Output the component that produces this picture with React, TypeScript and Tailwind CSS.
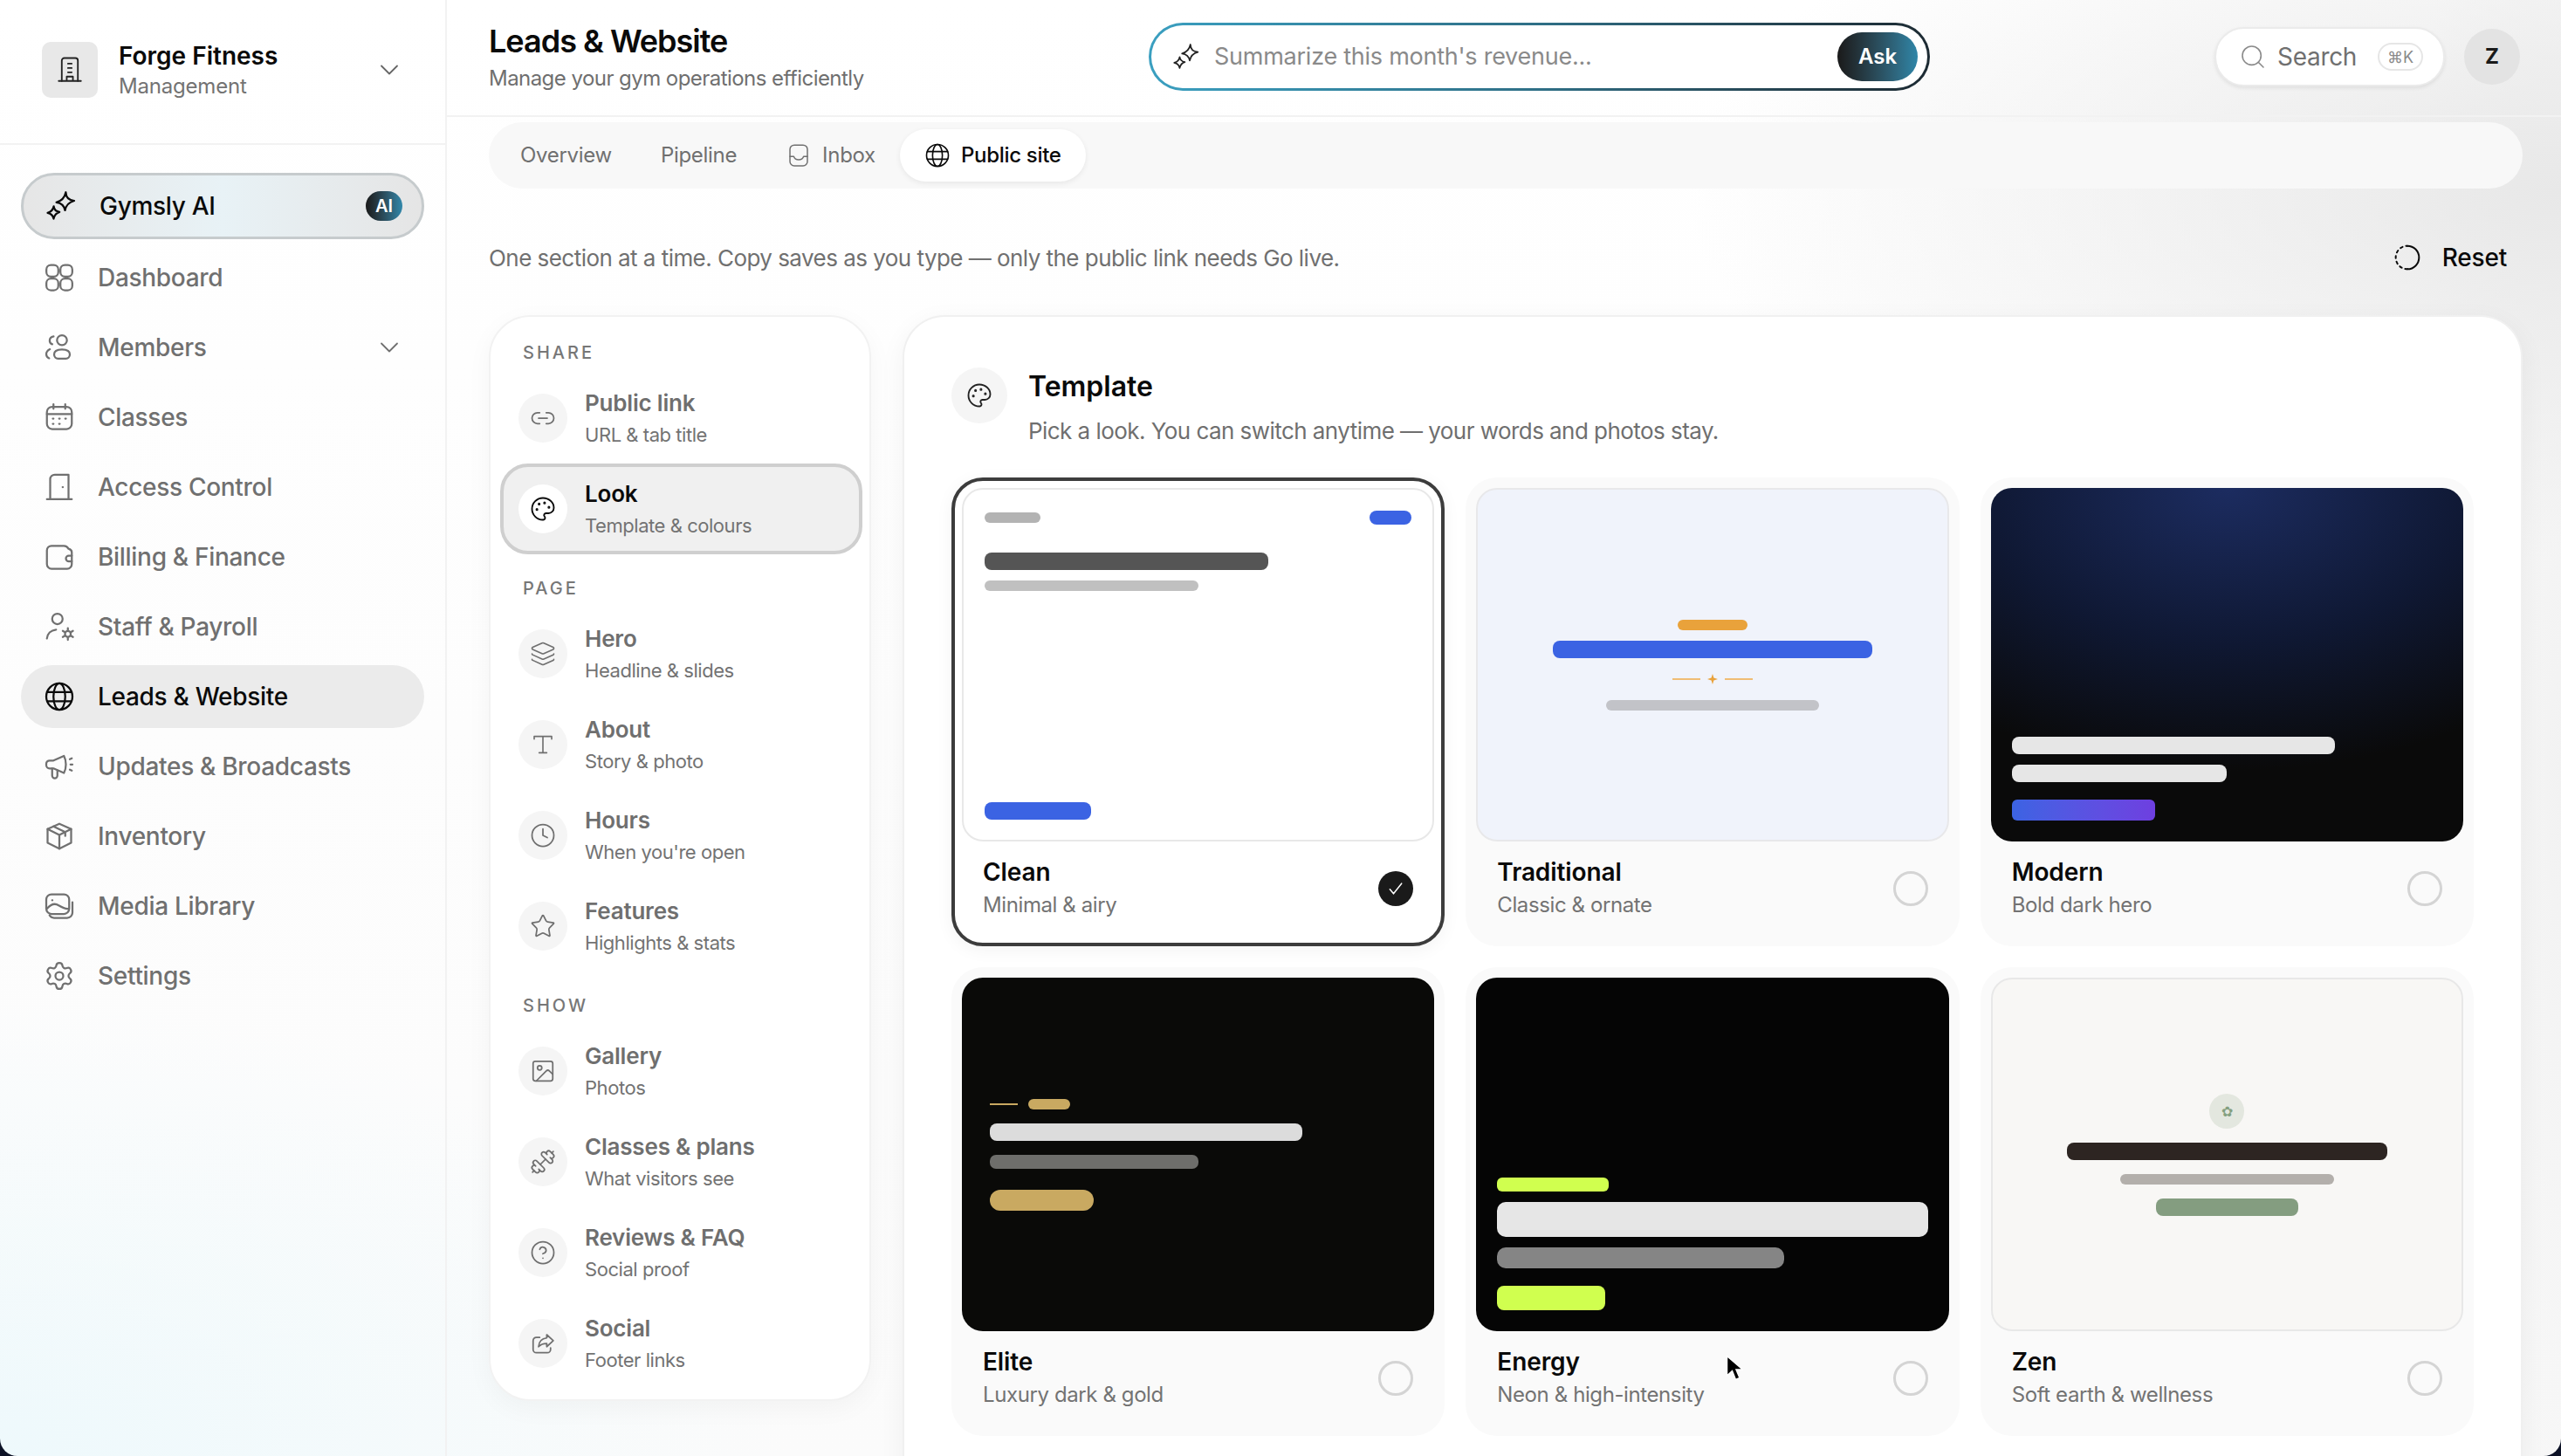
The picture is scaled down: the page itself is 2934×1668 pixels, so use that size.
import type { ReactNode } from 'react';
import {
  ChevronDown,
  CircleHelp,
  Clock,
  Dumbbell,
  Image,
  Layers,
  Link2,
  Palette,
  Search,
  Settings,
  Star,
} from 'lucide-react';

// ==============================
// 1. ICONS
// ==============================

function Ico({ size = 36, sw = 1.5, children }: { size?: number; sw?: number; children: ReactNode }) {
  return (
    <svg width={size} height={size} viewBox="0 0 24 24" fill="none" stroke="currentColor" strokeWidth={sw} strokeLinecap="round" strokeLinejoin="round" className="shrink-0">
      {children}
    </svg>
  );
}

const BuildingIcon = () => (
  <Ico size={34} sw={1.3}>
    <path d="M5.5 21V4.5a2 2 0 0 1 2-2h9a2 2 0 0 1 2 2V21" />
    <path d="M3 21h18M10.5 7h3M10.5 10.5h3M10.5 14h3M9.5 21v-3.5h5V21" />
  </Ico>
);
const SparkleIcon = ({ size = 36, sw = 1.5 }: { size?: number; sw?: number }) => (
  <Ico size={size} sw={sw}>
    <path d="M15.6 1.500 C15.700 5.400 17.500 7.600 22 8 C18 9.100 15.800 11.100 15 15.300 C14.300 11.400 12.500 9.700 8.400 9.200 C12.600 8.100 14.700 5.700 15.600 1.500Z" />
    <path d="M6.400 12.200 C6.600 14.600 7.800 16 10.800 16.600 C8.300 17.300 7 18.700 6.300 21.700 C5.800 19.100 4.600 17.800 1.700 17.200 C4.500 16.500 5.900 14.900 6.400 12.200Z" />
  </Ico>
);
const DashIcon = () => (
  <Ico>
    <rect x="2.100" y="2.400" width="9.100" height="8.900" rx="3.400" />
    <rect x="12.800" y="2.400" width="9.100" height="8.900" rx="3.400" />
    <rect x="2.100" y="12.800" width="9.100" height="8.900" rx="3.400" />
    <rect x="12.800" y="12.800" width="9.100" height="8.900" rx="3.400" />
  </Ico>
);
const MembersIcon = () => (
  <Ico>
    <circle cx="14" cy="6.500" r="3.800" />
    <path d="M14 13.500c-4 0-6 1.600-6 3.800 0 1.800 1.400 3.200 3 3.200h6c1.600 0 3-1.400 3-3.200 0-2.200-2-3.800-6-3.800z" />
    <path d="M7.600 3.600C5.600 4 4.600 5.200 4.600 6.800c0 1.300.7 2.300 2 2.800M4.800 13.400C3 14.300 2 15.600 2 17.200c0 1.400.8 2.500 2.200 3.100" />
  </Ico>
);
const CalendarIcon = () => (
  <Ico>
    <rect x="2.500" y="4" width="19" height="17" rx="4" />
    <path d="M7.500 2v3.500M16.500 2v3.500M2.500 9.500h19" />
    <path d="M7 13h.5M11.800 13h.5M16.500 13h.5M7 17h.5M11.800 17h.5" />
  </Ico>
);
const DoorIcon = () => (
  <Ico>
    <path d="M5 21V6a3.500 3.500 0 0 1 3.500-3.500H19V21" />
    <path d="M2.500 21.300h19M14.500 12h.2" />
  </Ico>
);
const WalletIcon = () => (
  <Ico>
    <path d="M19 5.800 C18.300 4.400 17.400 3.500 15.500 3.500 H6a3.500 3.500 0 0 0-3.500 3.500v10.500a3.500 3.500 0 0 0 3.500 3.500h12a3.500 3.500 0 0 0 3.500-3.500V8.500 C21.500 7 20.500 6.200 19 5.800z" />
    <path d="M21.500 11h-2.300a2.200 2.200 0 0 0 0 4.400h2.300" />
  </Ico>
);
const StaffIcon = () => (
  <Ico>
    <circle cx="10.500" cy="6" r="4" />
    <path d="M2.500 21c.3-3.600 3-6.300 7-6.800" />
    <circle cx="18.500" cy="17.500" r="2.200" />
    <path d="M18.500 13v2M18.500 20v2M14.600 15.200l1.700 1M20.700 18.800l1.700 1M14.600 19.800l1.700-1M20.700 16.200l1.700-1" />
  </Ico>
);
const GlobeIcon = ({ size = 36, sw = 1.5 }: { size?: number; sw?: number }) => (
  <Ico size={size} sw={sw}>
    <circle cx="12" cy="12" r="10" />
    <ellipse cx="12" cy="12" rx="4.500" ry="10" />
    <path d="M2.800 8.500h18.400M2.800 15.500h18.400" />
  </Ico>
);
const MegaphoneIcon = () => (
  <Ico>
    <path d="M15.500 4 7.500 7.500H4.500a2.500 2.500 0 0 0-2.500 2.500v1a2.500 2.500 0 0 0 2.500 2.500h3l8 3.500c.8-1.500 1.500-3.500 1.500-6.500s-.7-5-1.500-6.500z" />
    <path d="M6.500 13.500v5.500a2 2 0 0 0 4 0v-4" />
    <path d="M20 6.500l1.500-.7M20.500 10.500h1.500M20 14.500l1.500.7" />
  </Ico>
);
const PackageIcon = () => (
  <Ico>
    <path d="M12 2.500 3 6.500v10.500l9 4.500 9-4.500V6.500z" />
    <path d="M3 6.500l9 4.500 9-4.500M12 11v10.500M7.500 4.500l9 4.300v3" />
  </Ico>
);
const MediaIcon = () => (
  <Ico>
    <rect x="2" y="3" width="17.500" height="15" rx="4" />
    <path d="M22 9v8a4 4 0 0 1-4 4H8a4 4 0 0 1-3.500-2" />
    <path d="M6.500 7.500h.2M2.500 14c3-3.500 6-4.500 9-2.500 3 1.800 5 3 7.500 2.500" />
  </Ico>
);
const InboxIcon = () => (
  <Ico size={30} sw={1.2}>
    <rect x="4" y="2.500" width="16" height="19" rx="4" />
    <path d="M4 13h3.500c.6 1.800 2.200 3 4.500 3s3.900-1.200 4.500-3H20" />
  </Ico>
);
const SerifT = () => (
  <Ico size={30} sw={1.3}>
    <path d="M4 7V4.500h16V7M12 4.500v15M8.500 19.500h7" />
  </Ico>
);
const ShareBoxIcon = () => (
  <Ico size={30} sw={1.4}>
    <path d="M9 6.500H6a3 3 0 0 0-3 3v8a3 3 0 0 0 3 3h10a3 3 0 0 0 3-3v-1.500" />
    <path d="M15.500 4l6 5.500-6 5.500v-3c-3.500 0-5.500.8-7.500 3 .3-4.500 3-7.500 7.500-8z" />
  </Ico>
);
const ResetIcon = () => (
  <svg width="32" height="32" viewBox="0 0 24 24" fill="none" stroke="currentColor" strokeWidth="1.500" strokeLinecap="round" className="shrink-0">
    <path d="M12 2a10 10 0 0 1 0 20" />
    <path d="M12 22A10 10 0 0 1 12 2" strokeDasharray="2 3" />
  </svg>
);

// ==============================
// 2. DATA
// ==============================

const navItems = [
  { label: 'Dashboard', icon: <DashIcon /> },
  { label: 'Members', icon: <MembersIcon />, chevron: true },
  { label: 'Classes', icon: <CalendarIcon /> },
  { label: 'Access Control', icon: <DoorIcon /> },
  { label: 'Billing & Finance', icon: <WalletIcon /> },
  { label: 'Staff & Payroll', icon: <StaffIcon /> },
  { label: 'Leads & Website', icon: <GlobeIcon />, active: true },
  { label: 'Updates & Broadcasts', icon: <MegaphoneIcon /> },
  { label: 'Inventory', icon: <PackageIcon /> },
  { label: 'Media Library', icon: <MediaIcon /> },
  { label: 'Settings', icon: <Settings size={36} strokeWidth={1.5} /> },
];

const sections = [
  {
    title: 'SHARE',
    rows: [
      { name: 'Public link', sub: 'URL & tab title', icon: <Link2 size={30} strokeWidth={1.4} /> },
      { name: 'Look', sub: 'Template & colours', icon: <Palette size={30} strokeWidth={1.5} />, active: true },
    ],
  },
  {
    title: 'PAGE',
    rows: [
      { name: 'Hero', sub: 'Headline & slides', icon: <Layers size={30} strokeWidth={1.3} /> },
      { name: 'About', sub: 'Story & photo', icon: <SerifT /> },
      { name: 'Hours', sub: "When you're open", icon: <Clock size={30} strokeWidth={1.4} /> },
      { name: 'Features', sub: 'Highlights & stats', icon: <Star size={30} strokeWidth={1.4} /> },
    ],
  },
  {
    title: 'SHOW',
    rows: [
      { name: 'Gallery', sub: 'Photos', icon: <Image size={30} strokeWidth={1.4} /> },
      { name: 'Classes & plans', sub: 'What visitors see', icon: <Dumbbell size={30} strokeWidth={1.4} /> },
      { name: 'Reviews & FAQ', sub: 'Social proof', icon: <CircleHelp size={30} strokeWidth={1.4} /> },
      { name: 'Social', sub: 'Footer links', icon: <ShareBoxIcon /> },
    ],
  },
];

// ==============================
// 3. TEMPLATE PREVIEWS
// ==============================

const CleanPreview = () => (
  <div className="flex h-[405px] flex-col rounded-[24px] border-2 border-[#e8e8e8] bg-white pt-[24px] pr-[24px] pb-[23px] pl-[24px]">
    <div className="flex items-center justify-between">
      <div className="h-[12px] w-[64px] rounded-[6px] bg-[#b3b3b3]" />
      <div className="h-[16px] w-[48px] rounded-full bg-[#3b63e3]" />
    </div>
    <div className="mt-[32px] h-[20px] w-[325px] rounded-[8px] bg-[#555555]" />
    <div className="mt-[12px] h-[12px] w-[245px] rounded-[6px] bg-[#c0c0c0]" />
    <div className="mt-auto h-[20px] w-[122px] rounded-[8px] bg-[#3b63e3]" />
  </div>
);

const TraditionalPreview = () => (
  <div className="flex h-[405px] flex-col items-center justify-center rounded-[24px] border-2 border-[#e8e8ea] bg-[#f0f3fb]">
    <div className="h-[12px] w-[80px] rounded-[6px] bg-[#e9a23b]" />
    <div className="mt-[12px] h-[20px] w-[366px] rounded-[8px] bg-[#3b63e3]" />
    <div className="mt-[18px] flex h-[12px] items-center gap-[8px]">
      <div className="h-[2px] w-[32px] bg-[#f0bd74]" />
      <svg width="12" height="12" viewBox="0 0 12 12" className="text-[#e9a23b]">
        <path d="M6 0 7.400 4.600 12 6 7.400 7.400 6 12 4.600 7.400 0 6 4.600 4.600Z" fill="currentColor" />
      </svg>
      <div className="h-[2px] w-[32px] bg-[#f0bd74]" />
    </div>
    <div className="mt-[18px] h-[12px] w-[244px] rounded-[6px] bg-[#c2c3c8]" />
  </div>
);

const ModernPreview = () => (
  <div className="flex h-[405px] flex-col justify-end rounded-[24px] bg-[radial-gradient(ellipse_95%_80%_at_50%_0%,#1c2c60_0%,#0f1833_55%,#0a0a0a_100%)] p-[24px]">
    <div className="h-[20px] w-[370px] rounded-[8px] bg-[#e6e6e6]" />
    <div className="mt-[12px] h-[20px] w-[246px] rounded-[8px] bg-[#e6e6e6]" />
    <div className="mt-[20px] h-[24px] w-[164px] rounded-[6px] bg-gradient-to-r from-[#3b63e3] to-[#6e3fe0]" />
  </div>
);

const ElitePreview = () => (
  <div className="flex h-[405px] flex-col justify-center rounded-[24px] bg-[#0a0a08] pl-[32px]">
    <div className="flex items-center gap-[12px]">
      <div className="h-[2px] w-[32px] bg-[#c9a961]" />
      <div className="h-[12px] w-[48px] rounded-[6px] bg-[#c9a961]" />
    </div>
    <div className="mt-[16px] h-[20px] w-[358px] rounded-[8px] bg-[#dcdcdc]" />
    <div className="mt-[16px] h-[16px] w-[239px] rounded-[7px] bg-[#6e6e6b]" />
    <div className="mt-[24px] h-[24px] w-[119px] rounded-full bg-[#c9a961]" />
  </div>
);

const EnergyPreview = () => (
  <div className="flex h-[405px] flex-col justify-end rounded-[24px] bg-[#050505] px-[24px] pb-[24px]">
    <div className="h-[16px] w-[128px] rounded-[6px] bg-[#d0ff4f]" />
    <div className="mt-[12px] h-[40px] w-full rounded-[10px] bg-[#e6e6e6]" />
    <div className="mt-[12px] h-[24px] w-[329px] rounded-[10px] bg-[#858585]" />
    <div className="mt-[20px] h-[28px] w-[124px] rounded-[8px] bg-[#d0ff4f]" />
  </div>
);

const ZenPreview = () => (
  <div className="flex h-[405px] flex-col items-center justify-center rounded-[24px] border-2 border-[#e8e8e8] bg-[#f8f7f5]">
    <div className="flex h-[40px] w-[40px] items-center justify-center rounded-full bg-[#e3e7df] text-[16px] leading-none text-[#84a080]">✿</div>
    <div className="mt-[16px] h-[20px] w-[367px] rounded-[8px] bg-[#2d2522]" />
    <div className="mt-[16px] h-[12px] w-[245px] rounded-[6px] bg-[#b3afab]" />
    <div className="mt-[16px] h-[20px] w-[163px] rounded-[8px] bg-[#849d80]" />
  </div>
);

const templates = [
  { name: 'Clean', sub: 'Minimal & airy', preview: <CleanPreview />, selected: true },
  { name: 'Traditional', sub: 'Classic & ornate', preview: <TraditionalPreview /> },
  { name: 'Modern', sub: 'Bold dark hero', preview: <ModernPreview /> },
  { name: 'Elite', sub: 'Luxury dark & gold', preview: <ElitePreview /> },
  { name: 'Energy', sub: 'Neon & high-intensity', preview: <EnergyPreview /> },
  { name: 'Zen', sub: 'Soft earth & wellness', preview: <ZenPreview /> },
];

// ==============================
// 4. COMPONENT
// ==============================

function Sidebar() {
  return (
    <aside className="flex w-[512px] shrink-0 flex-col border-r-2 border-[#f2f2f2]">
      <div className="flex h-[166px] shrink-0 items-start border-b-2 border-[#f2f2f2] pt-[48px] pr-[46px] pl-[48px]">
        <div className="flex h-[64px] w-[64px] items-center justify-center rounded-[10px] bg-[#e8e8e8] text-[#222222]">
          <BuildingIcon />
        </div>
        <div className="ml-[24px] flex-1">
          <div className="mt-[-2px] text-[28px] leading-[36px] font-semibold text-[#0a0a0a]">Forge Fitness</div>
          <div className="text-[24px] leading-[34px] tracking-[-0.2px] text-[#737373]">Management</div>
        </div>
        <div className="mt-[14px] text-[#666666]">
          <ChevronDown size={36} strokeWidth={1.2} />
        </div>
      </div>

      <nav className="flex flex-col gap-[8px] px-[24px] pt-[32px]">
        <div className="flex h-[76px] items-center rounded-full border-[3px] border-[#c6cbcd] bg-gradient-to-r from-[#e6e6e6] via-[#e8f2f6] to-[#e5e5e5] pr-[22px] pl-[25px] text-[#0a0a0a]">
          <SparkleIcon />
          <span className="ml-[26px] flex-1 text-[28px] font-medium tracking-[-0.3px]">Gymsly AI</span>
          <span className="flex h-[34px] w-[42px] items-center justify-center rounded-full bg-gradient-to-r from-[#1a1a1a] to-[#3188ab] text-[20px] font-semibold text-white">AI</span>
        </div>
        {navItems.map((item) => (
          <div
            key={item.label}
            className={item.active
              ? 'flex h-[72px] items-center rounded-full bg-[#ebebeb] pr-[22px] pl-[26px] text-[#0a0a0a]'
              : 'flex h-[72px] items-center rounded-full pr-[22px] pl-[26px] text-[#707070]'}
          >
            {item.icon}
            <span className="ml-[26px] flex-1 text-[28px] font-medium tracking-[-0.3px]">{item.label}</span>
            {item.chevron && <ChevronDown size={36} strokeWidth={1.2} />}
          </div>
        ))}
      </nav>
    </aside>
  );
}

function Header() {
  return (
    <header className="flex h-[134px] shrink-0 items-center border-b-2 border-[#f2f2f2] pr-[47px] pl-[48px]">
      <div className="mt-[-2px] w-[756px]">
        <div className="text-[36px] leading-[46px] font-semibold tracking-[-1px] text-[#0a0a0a]">Leads &amp; Website</div>
        <div className="mt-[4px] text-[24px] leading-[32px] tracking-[-0.55px] text-[#6f6f6f]">Manage your gym operations efficiently</div>
      </div>

      {/* Ask bar with gradient ring */}
      <div className="mt-[-2px] h-[78px] w-[895px] rounded-full bg-gradient-to-r from-[#3a9fc0] via-[#2f6f86] to-[#1d2b33] p-[3px]">
        <div className="flex h-full items-center rounded-full bg-white pr-[11px] pl-[24px]">
          <span className="text-[#222222]">
            <SparkleIcon size={32} sw={1.3} />
          </span>
          <span className="ml-[16px] flex-1 text-[27px] tracking-[-0.25px] text-[#8a8a8a]">Summarize this month's revenue...</span>
          <span className="flex h-[56px] w-[92px] items-center justify-center rounded-full bg-gradient-to-r from-[#1a1a1a] to-[#2f86a8] text-[24px] font-semibold text-white">Ask</span>
        </div>
      </div>

      <div className="mt-[-2px] ml-auto flex items-center gap-[22px]">
        <div className="flex h-[68px] w-[264px] items-center rounded-full border-2 border-[#ebebeb] bg-white pl-[26px] shadow-[0_2px_4px_rgba(0,0,0,0.08)]">
          <span className="text-[#8a8a8a]">
            <Search size={32} strokeWidth={1.2} />
          </span>
          <span className="ml-[12px] text-[28px] tracking-[-0.3px] text-[#707070]">Search</span>
          <span className="ml-[24px] flex h-[32px] w-[52px] items-center justify-center rounded-full border-2 border-[#e6e6e6] text-[18px] text-[#8a8a8a]">⌘K</span>
        </div>
        <div className="flex h-[64px] w-[64px] items-center justify-center rounded-full bg-[#e3e3e3] text-[24px] font-bold text-[#1a1a1a]">Z</div>
      </div>
    </header>
  );
}

function Tabs() {
  return (
    <div className="mt-[6px] mr-[44px] ml-[48px] flex h-[76px] shrink-0 items-center rounded-full bg-[#f8f8f8] pl-[8px] text-[24px] tracking-[-0.3px] text-[#707070]">
      <div className="px-[28px]">Overview</div>
      <div className="px-[28px]">Pipeline</div>
      <div className="flex items-center gap-[12px] px-[28px]">
        <InboxIcon />
        <span>Inbox</span>
      </div>
      <div className="flex h-[60px] items-center gap-[12px] rounded-full bg-white px-[28px] font-medium text-[#0a0a0a] shadow-[0_2px_6px_rgba(0,0,0,0.07)]">
        <GlobeIcon size={30} sw={1.3} />
        <span>Public site</span>
      </div>
    </div>
  );
}

function SectionNav() {
  return (
    <div className="h-[1244px] w-[438px] shrink-0 rounded-[48px] border-2 border-[#f2f2f2] bg-white pt-[28px] pr-[8px] pl-[11px] shadow-[0_8px_30px_rgba(0,0,0,0.04)]">
      {sections.map((section, i) => (
        <div key={section.title} className={i > 0 ? 'mt-[26px]' : ''}>
          <div className="mb-[10px] pl-[26px] text-[20px] leading-[26px] font-medium tracking-[3px] text-[#777777]">{section.title}</div>
          {section.rows.map((row) => (
            <div
              key={row.name}
              className={row.active
                ? 'flex h-[104px] items-center rounded-[32px] border-[4px] border-[#cfcfcf] bg-[#f0f0f0] pl-[17px] text-[#0a0a0a]'
                : 'flex h-[104px] items-center rounded-[32px] border-[4px] border-transparent pl-[17px] text-[#6f6f6f]'}
            >
              <div className={row.active
                ? 'flex h-[56px] w-[56px] shrink-0 items-center justify-center rounded-full bg-white'
                : 'flex h-[56px] w-[56px] shrink-0 items-center justify-center rounded-full bg-[#f5f5f5]'}
              >
                {row.icon}
              </div>
              <div className="mt-[2px] ml-[20px]">
                <div className="text-[26px] leading-[36px] font-semibold tracking-[-0.2px]">{row.name}</div>
                <div className="text-[22px] leading-[36px] tracking-[-0.45px] text-[#737373]">{row.sub}</div>
              </div>
            </div>
          ))}
        </div>
      ))}
    </div>
  );
}

function TemplateCard({ name, sub, preview, selected }: { name: string; sub: string; preview: ReactNode; selected?: boolean }) {
  return (
    <div className={selected
      ? 'rounded-[36px] border-[4px] border-[#3c3c3c] bg-white p-[8px] shadow-[0_4px_20px_rgba(0,0,0,0.05)]'
      : 'rounded-[36px] border-[4px] border-transparent bg-[#fafafa] p-[8px]'}
    >
      {preview}
      <div className="flex h-[108px] items-center justify-between px-[24px]">
        <div>
          <div className="text-[28px] leading-[37px] font-semibold tracking-[-0.1px] text-[#0a0a0a]">{name}</div>
          <div className="text-[24px] leading-[37px] tracking-[-0.4px] text-[#737373]">{sub}</div>
        </div>
        {selected ? (
          <div className="flex h-[40px] w-[40px] items-center justify-center rounded-full bg-[#1a1a1a] text-white">
            <svg width="20" height="20" viewBox="0 0 24 24" fill="none" stroke="currentColor" strokeWidth="1.800" strokeLinecap="round" strokeLinejoin="round">
              <path d="M4 13l5 6L20 5" />
            </svg>
          </div>
        ) : (
          <div className="h-[40px] w-[40px] rounded-full border-[3px] border-[#d4d4d4]" />
        )}
      </div>
    </div>
  );
}

function TemplatePanel() {
  return (
    <div className="flex-1 rounded-t-[48px] border-2 border-b-0 border-[#f0f0f0] bg-white px-[54px] pt-[58px] pb-[40px] shadow-[0_8px_30px_rgba(0,0,0,0.05)]">
      <div className="flex items-start">
        <div className="flex h-[64px] w-[64px] items-center justify-center rounded-full bg-[#f5f5f5] text-[#222222]">
          <Palette size={30} strokeWidth={1.5} />
        </div>
        <div className="ml-[24px]">
          <div className="mt-[2px] text-[32px] leading-[40px] font-semibold text-[#0a0a0a]">Template</div>
          <div className="mt-[13px] text-[26px] leading-[36px] tracking-[-0.55px] text-[#6f6f6f]">Pick a look. You can switch anytime — your words and photos stay.</div>
        </div>
      </div>
      <div className="mt-[35px] grid grid-cols-3 gap-[24px]">
        {templates.map((t) => (
          <TemplateCard key={t.name} name={t.name} sub={t.sub} preview={t.preview} selected={t.selected} />
        ))}
      </div>
    </div>
  );
}

export default function App() {
  return (
    <div className="h-[1668px] w-[2934px] overflow-hidden bg-[#0c1226] font-['Inter',sans-serif]">
      <div className="relative flex h-full w-full overflow-hidden rounded-b-[20px] bg-white bg-[radial-gradient(ellipse_1000px_420px_at_2934px_220px,#e8e8e8_0%,rgba(255,255,255,0)_100%),radial-gradient(ellipse_180px_1500px_at_2934px_900px,#f2f2f2_0%,rgba(255,255,255,0)_100%),radial-gradient(ellipse_900px_520px_at_0px_1668px,#eef9fc_0%,rgba(255,255,255,0)_100%),linear-gradient(to_bottom,#ffffff,#fbfbfb)]">
        <Sidebar />
        <main className="flex min-w-0 flex-1 flex-col">
          <Header />
          <Tabs />
          <div className="mt-[59px] mr-[62px] ml-[48px] flex h-[40px] shrink-0 items-center justify-between">
            <div className="text-[26px] tracking-[-0.54px] text-[#707070]">One section at a time. Copy saves as you type — only the public link needs Go live.</div>
            <div className="flex items-center gap-[24px] text-[28px] font-medium tracking-[-0.2px] text-[#0a0a0a]">
              <ResetIcon />
              <span>Reset</span>
            </div>
          </div>
          <div className="mt-[46px] mr-[44px] ml-[48px] flex flex-1 items-start gap-[36px]">
            <SectionNav />
            <TemplatePanel />
          </div>
        </main>

        {/* mouse pointer caught in the screenshot */}
        <svg width="20" height="32" viewBox="0 0 20 32" className="absolute top-[1552px] left-[1977px]">
          <path d="M1.500 1.500V24l6-5.500 4 10 4.500-2-4-9.500H19.500z" fill="#000000" stroke="#ffffff" strokeWidth="1.500" />
        </svg>
      </div>
    </div>
  );
}
